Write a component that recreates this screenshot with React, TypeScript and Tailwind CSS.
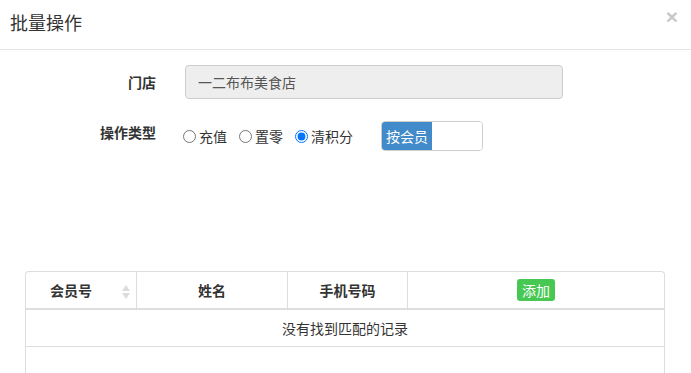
import React from "react";

const font = { fontFamily: '"Noto Sans CJK SC", "Liberation Sans", sans-serif' };

function SortIcon() {
  return (
    <svg width="8" height="14" viewBox="0 0 8 14" className="absolute right-[6px] top-[13px]">
      <path d="M4 0 L8 6 L0 6 Z" fill="#dcdcdc" />
      <path d="M4 14 L8 8 L0 8 Z" fill="#dcdcdc" />
    </svg>
  );
}

export default function App() {
  return (
    <div className="w-[691px] h-[373px] overflow-hidden bg-white text-[#333]" style={font}>
      {/* header */}
      <div className="relative h-[50px] border-b border-[#e5e5e5] pl-[10px] pt-[8px]">
        <h4 className="text-[18px] leading-[28px] text-[#333]">批量操作</h4>
        <span className="absolute right-[13px] top-[5px] text-[21px] font-bold leading-[24px] text-[#c8c8c8]" style={{ fontFamily: '"Liberation Sans", sans-serif' }}>
          ×
        </span>
      </div>

      {/* form */}
      <div className="pt-[15px]">
        <div className="flex items-center">
          <label className="w-[156px] text-right text-[14px] font-bold">门店</label>
          <div className="ml-[29px] flex h-[34px] w-[378px] items-center rounded-[4px] border border-[#ccc] bg-[#eee] px-[12px] text-[14px] text-[#555]">
            一二布布美食店
          </div>
        </div>

        <div className="mt-[22px] flex items-start">
          <label className="w-[156px] pt-[1px] text-right text-[14px] font-bold leading-[20px]">操作类型</label>
          <div className="ml-[27px] flex h-[30px] items-center text-[14px]">
            <label className="flex items-center">
              <input type="radio" name="op" className="m-0 h-[13px] w-[13px]" />
              <span className="ml-[3px]">充值</span>
            </label>
            <label className="ml-[12px] flex items-center">
              <input type="radio" name="op" className="m-0 h-[13px] w-[13px]" />
              <span className="ml-[3px]">置零</span>
            </label>
            <label className="ml-[12px] flex items-center">
              <input type="radio" name="op" defaultChecked className="m-0 h-[13px] w-[13px]" />
              <span className="ml-[3px]">清积分</span>
            </label>
            <div className="ml-[28px] flex h-[30px] w-[102px] overflow-hidden rounded-[4px] border border-[#ccc]">
              <div className="flex w-[50px] items-center justify-center bg-[#428bca] text-[14px] text-white">按会员</div>
              <div className="flex-1 bg-white" />
            </div>
          </div>
        </div>
      </div>

      {/* table */}
      <div className="ml-[25px] mt-[120px] w-[640px] rounded-t-[4px] border border-b-0 border-[#ddd]">
        <div className="flex h-[38px] border-b-2 border-[#ddd] text-[14px] font-bold">
          <div className="relative flex w-[110px] items-center justify-center pr-[20px]">
            会员号
            <SortIcon />
          </div>
          <div className="flex w-[151px] items-center justify-center border-l border-[#ddd]">姓名</div>
          <div className="flex w-[120px] items-center justify-center border-l border-[#ddd]">手机号码</div>
          <div className="flex flex-1 items-center justify-center border-l border-[#ddd]">
            <span className="rounded-[3px] bg-[#46c853] px-[5px] py-[1px] text-[14px] font-normal leading-[20px] text-white">添加</span>
          </div>
        </div>
        <div className="flex h-[37px] items-center justify-center border-b border-[#ddd] text-[14px]">
          没有找到匹配的记录
        </div>
        <div className="h-[40px]" />
      </div>
    </div>
  );
}
